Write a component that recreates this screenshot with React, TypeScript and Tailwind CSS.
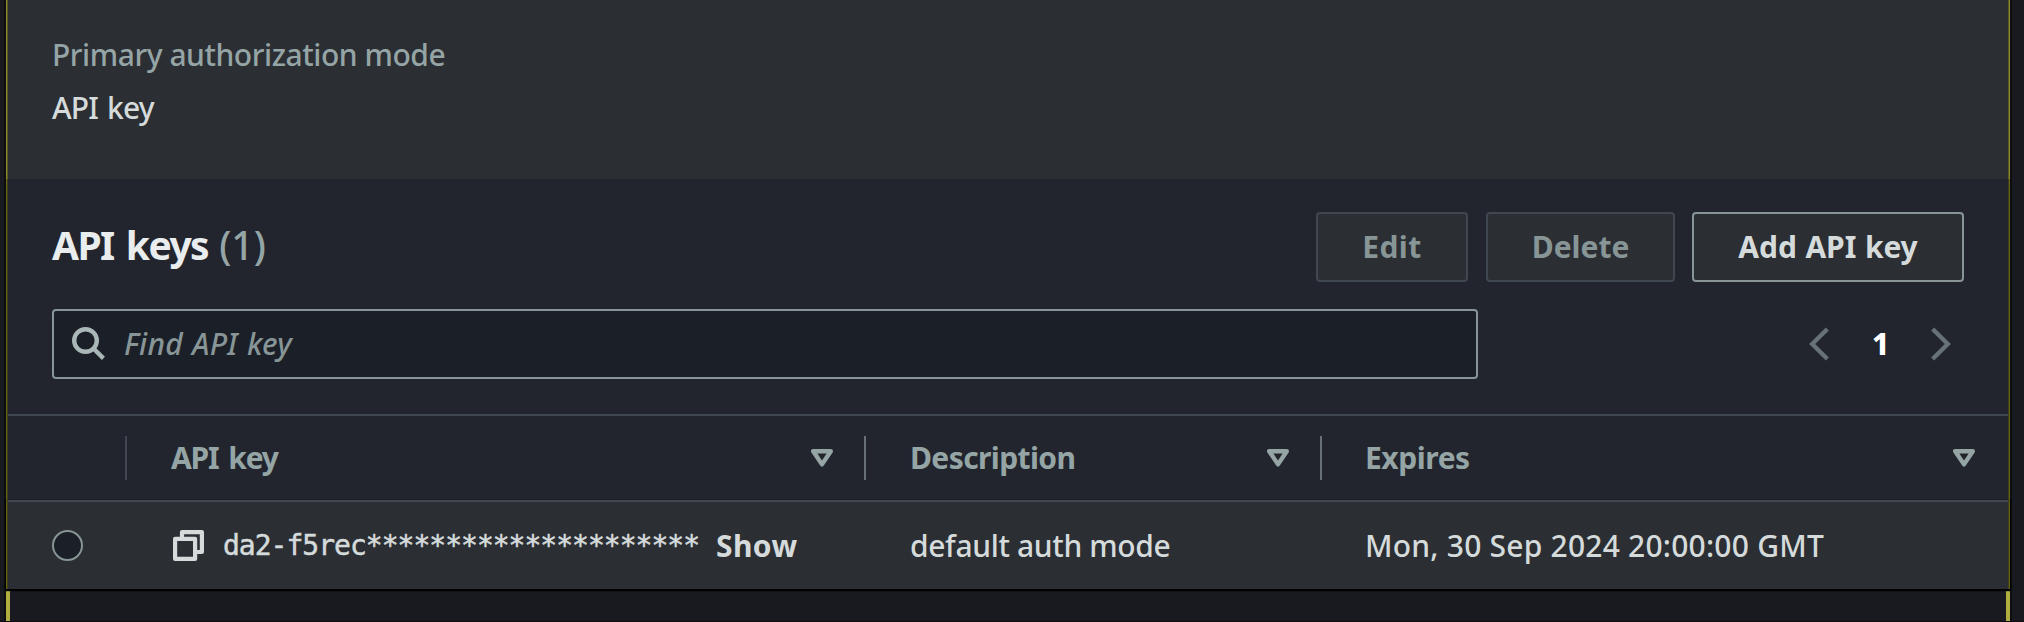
function SearchIcon() {
  return (
    <svg width="34" height="34" viewBox="0 0 34 34" fill="none" stroke="#aab7b8" strokeWidth="4.4" className="shrink-0">
      <circle cx="13.5" cy="13.5" r="11.3" />
      <path d="M22 22L31.4 31.4" />
    </svg>
  );
}

function Chevron({ flip = false }: { flip?: boolean }) {
  return (
    <svg
      width="20"
      height="34"
      viewBox="0 0 20 34"
      fill="none"
      stroke="#687078"
      strokeWidth="4.4"
      className={flip ? 'rotate-180' : ''}
    >
      <path d="M18.4 2L3.2 17L18.4 32" />
    </svg>
  );
}

function SortIcon() {
  return (
    <svg width="22" height="18" viewBox="0 0 22 18" fill="none" stroke="#95a5a6" strokeWidth="4.4" strokeLinejoin="round">
      <path d="M2.2 2.2H19.8L11 15.4Z" />
    </svg>
  );
}

function CopyIcon() {
  return (
    <svg width="31" height="31" viewBox="0 0 31 31" fill="none" stroke="#d5dbdb" strokeWidth="4.2" strokeLinejoin="round" className="shrink-0">
      <path d="M9 7V2.1H28.9V22H24" />
      <rect x="2.1" y="8.9" width="20" height="20" />
    </svg>
  );
}

function HeaderCell({ label, tracking, divider }: { label: string; tracking: string; divider: boolean }) {
  return (
    <div className="flex h-full items-center justify-between pl-11">
      <span className={`font-bold text-[#95a5a6] ${tracking}`}>{label}</span>
      <div className="flex items-center gap-[31px]">
        <SortIcon />
        {divider ? <span className="h-11 w-0.5 bg-[#687078]" /> : <span className="w-0.5" />}
      </div>
    </div>
  );
}

export default function App() {
  return (
    <div className="flex h-[622px] w-[2024px] overflow-hidden border-b border-[#130d12] bg-[#191a1f] font-['Noto_Sans',sans-serif] text-[30px] leading-10 font-medium whitespace-nowrap text-[#d5dbdb]">
      <div className="ml-1 w-0.5 bg-[#0d0e10]" />
      <div className="flex w-[2004px] flex-col">
        <section className="h-[179px] shrink-0 bg-[#2b2e33] px-[46px] pt-[35px] shadow-[inset_1px_0_0_#8b882b,inset_2px_0_0_#5a5a27,inset_-1px_0_0_#8b882b,inset_-2px_0_0_#5a5a27]">
          <div className="tracking-[-0.45px] text-[#95a5a6]">Primary authorization mode</div>
          <div className="mt-[13px] tracking-[-0.85px] [word-spacing:2px]">API key</div>
        </section>

        <section className="h-[321px] shrink-0 bg-[#22252d] px-0.5 shadow-[inset_1px_0_0_#646119,inset_2px_0_0_#403f1c,inset_-1px_0_0_#646119,inset_-2px_0_0_#403f1c]">
          <div className="px-11 pt-[33px]">
            <div className="flex h-[70px] items-center">
              <h2 className="mr-auto flex gap-[11px] pb-1 text-[39px]">
                <span className="font-bold tracking-[-1.55px] text-[#eaeded] [word-spacing:3.5px]">API keys</span>
                <span className="text-[#95a5a6]">(1)</span>
              </h2>
              <button className="h-[70px] w-[152px] rounded border-2 border-[#414750] bg-[#2b2e33] font-bold tracking-[0.4px] text-[#879596]">
                Edit
              </button>
              <button className="ml-[18px] h-[70px] w-[189px] rounded border-2 border-[#414750] bg-[#2b2e33] font-bold text-[#879596]">
                Delete
              </button>
              <button className="ml-[17px] h-[70px] w-[272px] rounded border-2 border-[#879596] bg-[#2b2e33] font-bold tracking-[-0.1px] [word-spacing:1px]">
                Add API key
              </button>
            </div>
            <div className="mt-[27px] flex items-center justify-between">
              <div className="flex h-[70px] w-[1426px] items-center gap-[18px] rounded border-2 border-[#879596] bg-[#1b1f27] pl-[18px]">
                <SearchIcon />
                <span className="tracking-[0.25px] text-[#879596] italic [word-spacing:1px]">Find API key</span>
              </div>
              <div className="flex items-center pr-[13px]">
                <Chevron />
                <span className="w-[102px] pl-[43px] font-extrabold text-white">1</span>
                <Chevron flip />
              </div>
            </div>
          </div>
          <div className="mt-[35px] grid h-[86px] grid-cols-[119px_739px_456px_686px] items-center border-t-2 border-[#414750]">
            <div className="flex justify-end">
              <span className="h-11 w-0.5 bg-[#414750]" />
            </div>
            <HeaderCell label="API key" tracking="tracking-[-1.15px] [word-spacing:3px]" divider />
            <HeaderCell label="Description" tracking="tracking-[-0.6px]" divider />
            <HeaderCell label="Expires" tracking="tracking-[-0.45px] -ml-px" divider={false} />
          </div>
        </section>

        <section className="relative h-[89px] shrink-0 bg-[#2b2e33] px-0.5 shadow-[0_1px_1px_1px_#000,inset_1px_0_0_#646119,inset_2px_0_0_#403f1c,inset_-1px_0_0_#646119,inset_-2px_0_0_#403f1c]">
          <div className="grid h-full grid-cols-[119px_739px_456px_686px] items-center border-t-2 border-[#414750]">
            <div className="pl-11">
              <div className="size-[31px] rounded-full border-2 border-[#879596] bg-[#1b1f27]" />
            </div>
            <div className="flex items-center pl-[46px]">
              <CopyIcon />
              <span className="ml-[19px] font-['DejaVu_Sans_Mono',monospace] text-[28px] tracking-[-0.99px] [-webkit-text-stroke:0.5px_#d5dbdb]">
                da2-f5rec*********************
              </span>
              <span className="ml-[17px] font-bold tracking-[0.4px]">Show</span>
            </div>
            <div className="pl-11 tracking-[-0.36px]">default auth mode</div>
            <div className="pl-[43px] tracking-[0.22px]">Mon, 30 Sep 2024 20:00:00 GMT</div>
          </div>
        </section>

        <div className="grow border-x-4 border-[#b0ae40]" />
      </div>
      <div className="w-0.5 bg-[#0d0e10]" />
    </div>
  );
}
